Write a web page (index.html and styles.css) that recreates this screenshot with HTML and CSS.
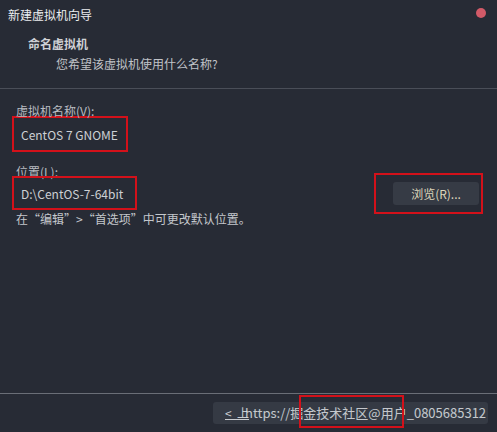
FILE: index.html
```html
<!DOCTYPE html>
<html lang="zh">
<head>
<meta charset="utf-8">
<title>新建虚拟机向导</title>
<link rel="stylesheet" href="styles.css">
</head>
<body>
<div class="dialog">
  <div class="titlebar">
    <span class="title">新建虚拟机向导</span>
    <span class="close"></span>
  </div>
  <div class="header">
    <div class="h-title">命名虚拟机</div>
    <div class="h-sub">您希望该虚拟机使用什么名称?</div>
  </div>
  <div class="content">
    <div class="label">虚拟机名称(V):</div>
    <div class="mark mark-name"><span class="value">CentOS 7 GNOME</span></div>
    <div class="label label-loc">位置(L):</div>
    <div class="loc-row">
      <div class="mark mark-loc"><span class="value">D:\CentOS-7-64bit</span></div>
      <div class="mark mark-browse"><span class="btn browse">浏览(R)...</span></div>
    </div>
    <div class="hint">在“编辑”&gt;“首选项”中可更改默认位置。</div>
  </div>
  <div class="footer">
    <div class="btns">
      <span class="prev">&lt;&nbsp;&nbsp;上</span>
      <span class="watermark">https://掘金技术社区@用户_0805685312</span>
      <span class="mark mark-next"></span>
    </div>
  </div>
</div>
</body>
</html>
```

FILE: styles.css
```css
html, body {
  margin: 0;
  padding: 0;
}
body {
  background: #272b35;
  font-family: "Noto Sans CJK SC", "Noto Sans", sans-serif;
  font-size: 12px;
  color: #c4c7cc;
}
.dialog {
  width: 497px;
  height: 432px;
  display: flex;
  flex-direction: column;
  overflow: hidden;
}
.titlebar {
  height: 30px;
  display: flex;
  align-items: center;
  justify-content: space-between;
  padding: 0 11px 0 8px;
}
.title {
  color: #eceef0;
  line-height: 30px;
}
.close {
  width: 10px;
  height: 10px;
  border-radius: 50%;
  background: #d25a68;
  margin-top: -4px;
}
.header {
  height: 58px;
  padding-left: 28px;
  border-bottom: 1px solid #4a4e58;
}
.h-title {
  font-weight: bold;
  color: #cfd1d5;
  line-height: 20px;
  margin-top: 4px;
}
.h-sub {
  padding-left: 28px;
  line-height: 20px;
  color: #c0c3c8;
}
.content {
  flex: 1;
  padding: 13px 14px 0 12px;
}
.label {
  padding-left: 4px;
  line-height: 18px;
  color: #b9bcc2;
}
.mark {
  border: 2px solid #d3111a;
  box-sizing: border-box;
}
.mark-name {
  width: 116px;
  height: 36px;
  margin-top: -4px;
  display: flex;
  align-items: center;
  padding-left: 7px;
}
.value {
  color: #cdd0d4;
}
.label-loc {
  margin-top: 11px;
}
.loc-row {
  display: flex;
  align-items: flex-start;
  justify-content: space-between;
  margin-top: -8px;
}
.mark-loc {
  width: 125px;
  height: 34px;
  margin-top: 3px;
  display: flex;
  align-items: center;
  padding-left: 7px;
}
.mark-browse {
  width: 109px;
  height: 41px;
  display: flex;
  align-items: center;
  padding-left: 17px;
}
.btn {
  background: #363b45;
  border-radius: 3px;
  width: 86px;
  height: 23px;
  line-height: 23px;
  text-align: center;
  color: #ddd6bb;
}
.hint {
  padding-left: 4px;
  line-height: 18px;
  margin-top: -4px;
  color: #c4c7cc;
}
.footer {
  height: 38px;
  border-top: 1px solid #6a6e77;
  position: relative;
}
.btns {
  position: absolute;
  left: 213px;
  top: 8px;
  width: 275px;
  height: 22px;
  background: #353a44;
  border-radius: 3px;
  color: #c9ccd0;
  display: flex;
  align-items: center;
}
.prev {
  padding-left: 12px;
  line-height: 22px;
  text-decoration: underline;
  text-decoration-color: #c9ccd0;
}
.watermark {
  position: absolute;
  left: 32px;
  top: 0;
  line-height: 22px;
  font-size: 13px;
  color: #dfe1e4;
  white-space: nowrap;
  opacity: 0.85;
}
.mark-next {
  position: absolute;
  left: 86px;
  top: -7px;
  width: 105px;
  height: 33px;
}
```
